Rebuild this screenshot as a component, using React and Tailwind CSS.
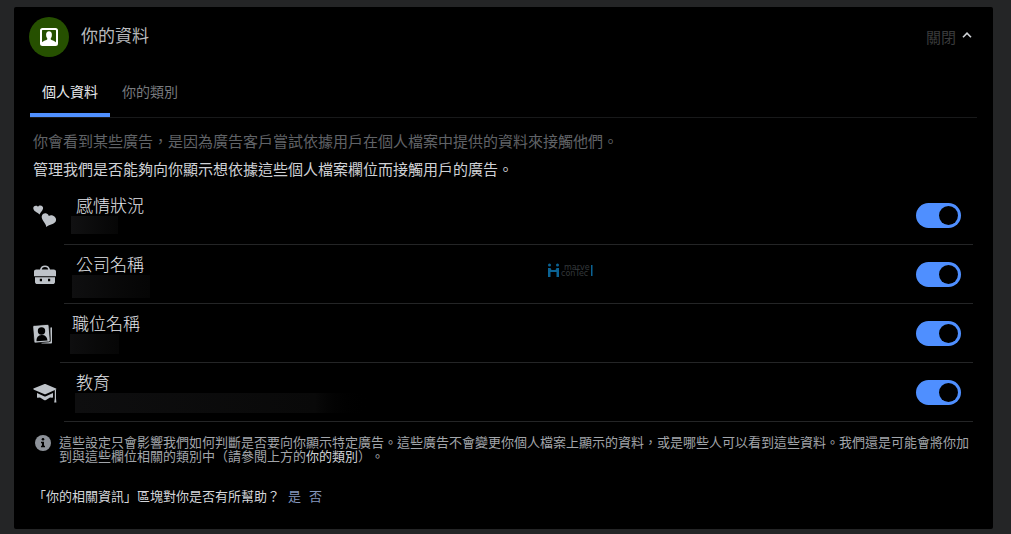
import React, { useState } from 'react';
import clsx from 'clsx';

// --- Icons ---
const ProfileIcon = () => (
    <svg viewBox="0 0 18 18" className="size-[18px]" aria-hidden="true">
        <rect x="1" y="1" width="16" height="16" rx="1.500" fill="none" stroke="#fff" strokeWidth="2" />
        <ellipse cx="9" cy="7" rx="2.900" ry="3.700" fill="#fff" />
        <path fill="#fff" d="M7.300 9h3.400v2.200c.3 1 4.300 1.400 5.600 3.600V17H1.700v-2.200c1.300-2.200 5.300-2.600 5.600-3.600Z" />
    </svg>
);

const HeartsIcon = () => (
    <svg viewBox="0 0 24 24" className="h-6 w-[31px] pr-[7px]" fill="#bec3c9" aria-hidden="true">
        <path d="M0.300 4.600C0 2.700 1.500 1.600 3 1.700c1 0 1.700.6 2 1 .5-.8 1.300-1.300 2.300-1.300C9 1.400 10.600 2.700 10 4.700 9.400 6.700 7.700 8 6.600 10.400 4.500 8.600.800 7.600.300 4.600Z" />
        <path d="M7.700 12.600c.2-2.600 2.900-3.800 4.800-3.100 1.400.5 2.100 1.500 2.300 2.400 1-.7 2.400-1 3.900-.4 2.600.9 4.200 3.500 3 6-1.200 2.600-5.900 2.700-9.400 5.400-.7-4-4.900-6.700-4.600-10.300Z" transform="translate(1)" />
    </svg>
);

const BriefcaseIcon = () => (
    <svg viewBox="0 0 24 24" className="h-6 w-[31px] pr-[7px]" fill="#bec3c9" aria-hidden="true">
        <path
            fillRule="evenodd"
            d="M7 6.500C7.300 4 9.300 2.400 12 2.400S16.700 4 17 6.500h3.800c1.200 0 2.200.9 2.200 2.100v4.600H1V8.600C1 7.400 2 6.500 3.200 6.500Zm1.800 0h6.400c-.4-1.600-1.600-2.400-3.200-2.400S9.200 4.900 8.800 6.500Z"
        />
        <path
            fillRule="evenodd"
            d="M2 14.300h20v4.600c0 1.200-1 2.100-2.200 2.100H4.200C3 21 2 20.100 2 18.900Zm4.800 1.400v2.500H9v-2.500Zm8.200 0v2.500h2.200v-2.500Z"
        />
    </svg>
);

const CardsIcon = () => (
    <svg viewBox="0 0 20 20" className="h-5 w-[27px] pr-[7px]" aria-hidden="true">
        <path fill="none" stroke="#bec3c9" strokeWidth="1.600" strokeLinecap="round" strokeLinejoin="round" d="M18.200 4v14.800H9" />
        <path
            fill="#bec3c9"
            stroke="#000"
            strokeWidth="0.800"
            d="M1.300 1.400 14 .4c1.200-.1 1.900.5 2 1.600L17.200 16c.1 1.100-.5 1.800-1.600 1.900L3 19c-1.200.1-1.900-.5-2-1.600L-.2 3.300c-.1-1.100.4-1.800 1.500-1.900Z"
        />
        <circle cx="8.500" cy="7" r="3.700" fill="#000" />
        <path fill="#000" d="M3.500 17.300c-.2-3.600 1.500-5.900 5-6.200s5.500 1.700 6 5.300Z" />
    </svg>
);

const GraduationIcon = () => (
    <svg viewBox="0 0 24 24" className="h-6 w-[31px] pr-[7px]" fill="#bec3c9" aria-hidden="true">
        <path d="M11 3.200c.7-.300 1.300-.300 2 0l10 4.300c.5.2.5.900 0 1.100l-10 4.500c-.7.300-1.300.300-2 0L1 8.700C0 8.300 0 7.700 1 7.300Z" />
        <path d="M4 12.100l7 3.100c.7.300 1.300.300 2 0l7-3.100v3.600c0 .5-.2.900-.6 1L17 16.400l-4 2.600c-.7.400-1.300.400-2 0l-4-2.600-2.400.4c-.400 0-.600-.4-.600-.9Z" />
        <path d="M21.800 8.500h1.200v9l.4 4h-2.200l.6-4Z" />
    </svg>
);

const InfoIcon = () => (
    <svg viewBox="0 0 16 16" className="size-4 shrink-0" aria-hidden="true">
        <circle cx="8" cy="8" r="8" fill="#8d9299" />
        <circle cx="8" cy="4.300" r="1.300" fill="#000" />
        <path fill="#000" d="M6 6.800h3v4h1v1.500H6v-1.500h1V8.200H6Z" />
    </svg>
);

const Watermark = () => (
    <svg viewBox="0 0 46 16" className="absolute top-[255px] left-1/2 ml-[43px] h-4 w-[46px]" aria-hidden="true">
        <g fill="#0b6394">
            <circle cx="2.500" cy="3" r="1.500" />
            <circle cx="10.500" cy="3" r="1.500" />
            <path d="M1 6h2.500l1 2h4l1-2H12v9H9.500v-5h-6v5H1Z" />
            <rect x="44" y="3" width="1.500" height="11" />
        </g>
        <g fill="#34383b" fontFamily="DejaVu Sans, sans-serif" fontSize="8">
            <text x="17" y="8">marve</text>
            <text x="14" y="14">conTec</text>
        </g>
    </svg>
);

// --- Profile fields ---
const FIELDS = [
    { id: 'relationship', label: '感情狀況', Icon: HeartsIcon, value: '-ml-[5px] h-[18px] w-[47px] from-[#111112] to-[#060606]' },
    { id: 'employer', label: '公司名稱', Icon: BriefcaseIcon, value: '-ml-1 h-[23px] w-[78px] from-[#0f0f10] to-[#050505]' },
    { id: 'job', label: '職位名稱', Icon: CardsIcon, value: '-ml-[2px] h-5 w-[49px] from-[#0e0e0f] to-[#060606]' },
    { id: 'education', label: '教育', Icon: GraduationIcon, value: '-ml-px h-5 w-[300px] from-[#0e0e0f] via-[#090909] via-80% to-black' },
];

const TABS = ['個人資料', '你的類別'];

const FieldRow = ({ id, label, Icon, value }) => {
    const [enabled, setEnabled] = useState(true);

    return (
        <li className="flex h-[59px] items-stretch">
            <div className="flex shrink-0 items-center">
                <Icon />
            </div>
            <div className="flex flex-1 items-center justify-between border-b border-[#242526] pr-3 pl-3">
                <div className="flex h-full flex-col pt-2">
                    <label htmlFor={id} className="text-[17px] leading-[22px] font-light text-[#e4e6eb]">{label}</label>
                    <span className={clsx('block bg-linear-to-r', value)} />
                </div>
                <input
                    id={id}
                    type="checkbox"
                    role="switch"
                    checked={enabled}
                    onChange={() => setEnabled(!enabled)}
                    className="flex h-[25px] w-[45px] shrink-0 cursor-pointer appearance-none items-center rounded-full bg-[#3a3b3c] px-[3px] before:block before:size-[19px] before:rounded-full before:bg-black checked:justify-end checked:bg-[#4f8fff]"
                />
            </div>
        </li>
    );
};

const App = () => {
    const [tab, setTab] = useState(TABS[0]);

    return (
        <div className="min-h-screen bg-[#242526] pt-[7px] pr-[18px] pb-[5px] pl-[14px] font-['Noto_Sans_CJK_TC',sans-serif] [text-spacing-trim:space-all]">
            <main className="relative rounded-xs bg-black px-4 pt-[10px] pb-6">
                <header className="flex items-center justify-between">
                    <div className="flex items-center gap-3">
                        <div className="-ml-px flex size-10 items-center justify-center rounded-full bg-[#265000]">
                            <ProfileIcon />
                        </div>
                        <h1 className="pb-1 text-[17px] leading-5 text-[#b8babd]">你的資料</h1>
                    </div>
                    <button type="button" className="flex cursor-pointer items-center gap-[6px] pr-[5px] text-[15px] leading-5 text-[#3a3b3c]">
                        關閉
                        <svg viewBox="0 0 10 6" className="mb-1 h-[6px] w-[10px]" fill="none" stroke="#d0d3d7" strokeWidth="1.600" aria-hidden="true">
                            <path d="M1 5.200 5 1.200l4 4" />
                        </svg>
                    </button>
                </header>

                <div role="tablist" className="mt-[14px] flex border-b border-[#18191a]">
                    {TABS.map((name) => (
                        <button
                            key={name}
                            type="button"
                            role="tab"
                            aria-selected={tab === name}
                            onClick={() => setTab(name)}
                            className={clsx(
                                'cursor-pointer border-b-4 px-3 pt-[11px] pb-[13px] text-sm leading-[18px]',
                                tab === name ? 'border-[#4f8fff] text-[#e9ebee]' : 'border-transparent text-[#777a7e]'
                            )}
                        >
                            {name}
                        </button>
                    ))}
                </div>

                <section className="pt-[13px] pr-1 pl-[3px]">
                    <p className="text-[15px] leading-5 text-[#606367]">你會看到某些廣告，是因為廣告客戶嘗試依據用戶在個人檔案中提供的資料來接觸他們。</p>
                    <p className="mt-2 text-[15px] leading-5 text-[#cfd1d5]">管理我們是否能夠向你顯示想依據這些個人檔案欄位而接觸用戶的廣告。</p>

                    <ul className="mt-[7px]">
                        {FIELDS.map((field) => (
                            <FieldRow key={field.id} {...field} />
                        ))}
                    </ul>

                    <div className="mt-[13px] flex items-start gap-2 pl-[2px]">
                        <InfoIcon />
                        <p className="text-[13px] leading-[14px] text-[#a2a5aa]">
                            這些設定只會影響我們如何判斷是否要向你顯示特定廣告。這些廣告不會變更你個人檔案上顯示的資料，或是哪些人可以看到這些資料。我們還是可能會將你加到與這些欄位相關的類別中（請參閱上方的<span className="text-[#cfd1d5]">你的類別</span>）。
                        </p>
                    </div>

                    <div className="mt-6 flex gap-2 text-[13px] leading-[18px] text-[#d4d6da]">
                        <p>「你的相關資訊」區塊對你是否有所幫助？</p>
                        <a href="#yes" className="text-[#8496bd]">是</a>
                        <a href="#no" className="text-[#8496bd]">否</a>
                    </div>
                </section>

                <Watermark />
            </main>
        </div>
    );
};

export default App;
